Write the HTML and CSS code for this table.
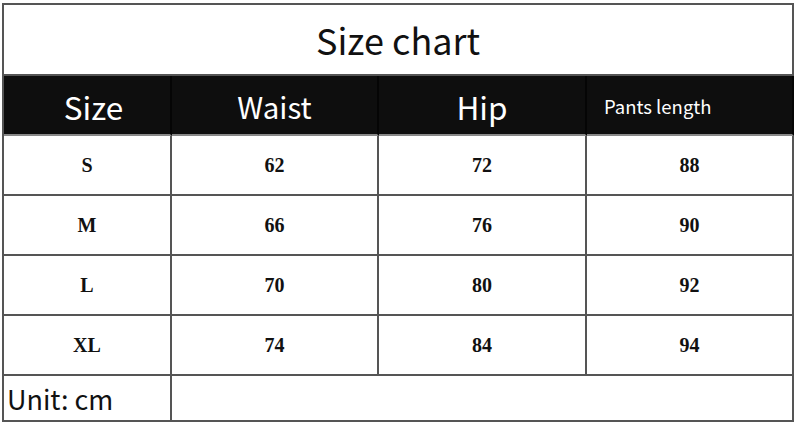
FILE: index.html
```html
<!DOCTYPE html>
<html>
<head>
<meta charset="utf-8">
<link rel="stylesheet" href="styles.css">
</head>
<body>
<div class="chart">
  <div class="cell title">Size chart</div>
  <div class="cell head big first">Size</div>
  <div class="cell head">Waist</div>
  <div class="cell head big">Hip</div>
  <div class="cell head small">Pants length</div>

  <div class="cell data">S</div><div class="cell data">62</div><div class="cell data">72</div><div class="cell data">88</div>
  <div class="cell data">M</div><div class="cell data">66</div><div class="cell data">76</div><div class="cell data">90</div>
  <div class="cell data">L</div><div class="cell data">70</div><div class="cell data">80</div><div class="cell data">92</div>
  <div class="cell data">XL</div><div class="cell data">74</div><div class="cell data">84</div><div class="cell data">94</div>

  <div class="cell unit">Unit: cm</div>
  <div class="cell blank"></div>
</div>
</body>
</html>
```

FILE: styles.css
```css
html, body {
  margin: 0;
  padding: 0;
  background: #ffffff;
}
body {
  padding: 3px 0 0 2px;
  font-family: "Noto Sans CJK SC", "Noto Sans", sans-serif;
  color: #111;
}
.chart {
  display: grid;
  width: 790px;
  grid-template-columns: 168px 207px 208px 207px;
  grid-template-rows: 71px 60px 60px 60px 60px 60px 46px;
  border-top: 2px solid #555;
  border-left: 2px solid #555;
}
.cell {
  border-right: 2px solid #555;
  border-bottom: 2px solid #555;
  display: flex;
  align-items: center;
  justify-content: center;
  box-sizing: border-box;
  overflow: hidden;
}
.title {
  grid-column: 1 / 5;
  font-size: 36px;
  padding-bottom: 2px;
}
.head {
  background: #0e0e0e;
  color: #fff;
  font-size: 29.5px;
  padding-top: 2px;
  border-right-color: #050505;
  border-bottom-color: #888;
}
.head.big {
  font-size: 31.5px;
}
.head.first {
  padding-left: 13px;
}
.head.small {
  font-size: 18.5px;
  justify-content: flex-start;
  padding-left: 17px;
}
.data {
  font-family: "Liberation Serif", serif;
  font-weight: bold;
  font-size: 20px;
  color: #111;
}
.unit {
  justify-content: flex-start;
  font-size: 27px;
  padding-left: 3px;
  padding-top: 1px;
}
.blank {
  grid-column: 2 / 5;
}
```
